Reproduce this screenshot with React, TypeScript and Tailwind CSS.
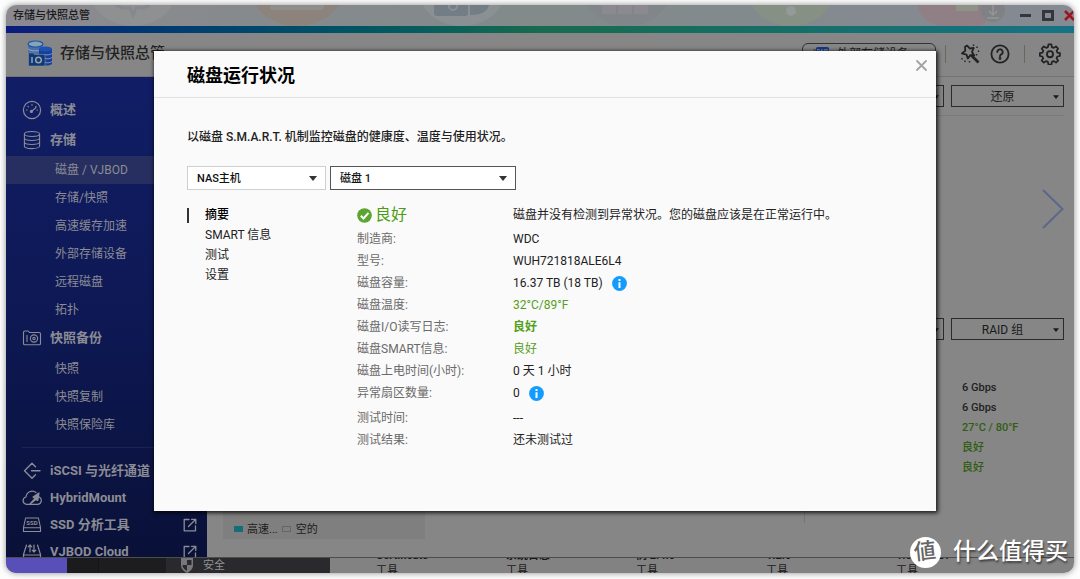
import type { ReactNode } from 'react';

const stroke = { fill: 'none', stroke: 'currentColor', strokeLinecap: 'round', strokeLinejoin: 'round' } as const;

function GaugeIcon() {
  return (
    <svg width="20" height="20" viewBox="0 0 20 20" {...stroke} strokeWidth="1.2" aria-hidden="true">
      <circle cx="10" cy="10" r="8.6" />
      <path d="M4.5 10h.6M6 6.4l.4.4M10 4.6v.6M14 6.4l-.4.4M15 10h.5M10 11l4-3.4" />
      <circle cx="9.4" cy="11.4" r="1" fill="currentColor" />
    </svg>
  );
}

function StackIcon() {
  return (
    <svg width="20" height="20" viewBox="0 0 20 20" {...stroke} strokeWidth="1.1" aria-hidden="true">
      <ellipse cx="10" cy="4" rx="7.6" ry="2.5" />
      <path d="M2.4 4v12c0 1.4 3.4 2.6 7.6 2.6s7.6-1.2 7.6-2.6V4M2.4 8c0 1.4 3.4 2.5 7.6 2.5s7.6-1.1 7.6-2.5M2.4 12c0 1.4 3.4 2.5 7.6 2.5s7.6-1.1 7.6-2.5" />
    </svg>
  );
}

function SnapshotIcon() {
  return (
    <svg width="20" height="20" viewBox="0 0 20 20" {...stroke} strokeWidth="1.1" aria-hidden="true">
      <path d="M1.5 4.5c0-.9.5-1.5 1.3-1.5h3.4l1.3 1.500h9.700c.8 0 1.300.5 1.300 1.300v9.700c0 .8-.5 1.300-1.300 1.300H2.800c-.8 0-1.300-.5-1.300-1.300z" />
      <path d="M5 7.500v6" />
      <circle cx="12" cy="10.5" r="3.6" />
      <circle cx="12" cy="10.5" r="1.2" />
    </svg>
  );
}

function IscsiIcon() {
  return (
    <svg width="20" height="20" viewBox="0 0 20 20" {...stroke} strokeWidth="1.4" aria-hidden="true">
      <path d="M13.5 5.800 10 2.300 2.500 9.700l7.500 7.500 3.500-3.500M9.500 9.700H18" />
    </svg>
  );
}

function CloudMountIcon() {
  return (
    <svg width="20" height="20" viewBox="0 0 20 20" {...stroke} strokeWidth="1.2" aria-hidden="true">
      <path d="M8 16.300H4.600a3.700 3.700 0 0 1-.6-7.300A6.200 6.200 0 0 1 14 4.500M17.300 9a3.900 3.900 0 0 1-1.700 7.300H8" />
      <path d="m8 16 5-5.500-2-1.500 6-4-1.200 7.500-1.600-1.200z" fill="currentColor" />
    </svg>
  );
}

function SsdIcon() {
  return (
    <svg width="20" height="20" viewBox="0 0 20 20" {...stroke} strokeWidth="1.1" aria-hidden="true">
      <path d="M3.6 3h12.800l2.100 9.500v4H1.500v-4zM1.500 12.800h17" />
      <text x="10" y="10.200" textAnchor="middle" fontSize="6" fontWeight="700" fontFamily="Roboto, sans-serif" fill="currentColor" stroke="none">SSD</text>
    </svg>
  );
}

function CloudDiskIcon() {
  return (
    <svg width="20" height="20" viewBox="0 0 20 20" {...stroke} strokeWidth="1.2" aria-hidden="true">
      <path d="M4.5 3 1.500 12.500v4h17v-4L15.500 3M1.500 13h17M8 10V3M6.200 4.800 8 3l1.800 1.800M12 3v7M10.200 8.200 12 10l1.800-1.800" />
    </svg>
  );
}

function OpenIcon() {
  return (
    <svg width="14" height="14" viewBox="0 0 14 14" {...stroke} strokeWidth="1.3" aria-hidden="true">
      <path d="M6 1.500H1.200v11.300h11.300V8M5.500 8.500l7-7M8.500 1.300h4.300v4.300" />
    </svg>
  );
}

function AppLogo() {
  return (
    <svg width="26" height="27" viewBox="0 0 26 27" aria-hidden="true">
      <path d="M1 3.500v12h15v-12z" fill="#4b6fa8" />
      <ellipse cx="8.5" cy="4" rx="7.5" ry="3" fill="#87a3b8" stroke="#1c55a8" strokeWidth="1.2" />
      <path d="M1 9c3 2.500 12 2.500 15 0" stroke="#9aa6c0" fill="none" />
      <path d="M12 9v15c3 2 10 2 13 0V9z" fill="#183f9c" />
      <ellipse cx="18.5" cy="9" rx="6.5" ry="2.6" fill="#1d52b0" />
      <path d="M17 14.500c3 .8 6 .3 8-.9M18 18.500c3 .6 5 .2 7-.9M18 22.500c3 .6 5 .2 7-.9" stroke="#8592b4" fill="none" />
      <path d="M1.500 13h5l1 1.500H18V26H1.500z" fill="#0c3a78" stroke="#8a8f98" strokeWidth=".6" />
      <path d="M5 17v6" stroke="#9aa0a8" strokeWidth="1.5" />
      <circle cx="11.5" cy="20" r="2.8" stroke="#9aa0a8" strokeWidth="1.5" fill="none" />
    </svg>
  );
}

function WandIcon() {
  return (
    <svg width="20" height="20" viewBox="0 0 20 20" {...stroke} strokeWidth="1.8" strokeLinecap="butt" aria-hidden="true">
      <path d="m7.200 1.600 2.500 2.900 4-.7-1.700 4.200 2.200 3.400-4-.2-2.300 3.400-1.400-4-4.600-1.200 3.400-2.600-.3-4z" />
      <path d="m11 11 7.500 7.500" strokeWidth="2.6" />
      <path d="M13.500.5V2M17 2.500V4M18.500 6.500V8M16.500 10v1.500M2 14v1.500M5 16.500V18M9.500 17v1.500" strokeWidth="1.4" />
    </svg>
  );
}

function HelpIcon() {
  return (
    <svg width="20" height="20" viewBox="0 0 20 20" {...stroke} strokeWidth="1.8" aria-hidden="true">
      <circle cx="10" cy="10" r="8.6" />
      <path d="M7.300 8a2.700 2.700 0 1 1 3.900 2.400c-.8.4-1.200.9-1.200 1.800" />
      <circle cx="10" cy="14.500" r=".5" fill="currentColor" />
    </svg>
  );
}

function GearIcon() {
  return (
    <svg width="22" height="22" viewBox="0 0 24 24" {...stroke} strokeWidth="2" aria-hidden="true">
      <path d="M10.300 1.500h3.400l.6 3 2.100.9 2.600-1.700 2.400 2.400-1.700 2.600.9 2.100 2.900.5v3.400l-3 .6-.9 2.100 1.800 2.500-2.400 2.400-2.600-1.700-2.100.9-.6 3h-3.400l-.6-3-2.100-.9L5 22.300l-2.400-2.400 1.700-2.500-.9-2.100-2.900-.6v-3.400l3-.5.9-2.100-1.800-2.600L5 3.700l2.600 1.700 2.100-.9z" transform="translate(.5 .2) scale(.95)" />
      <circle cx="12" cy="12.200" r="3.300" />
    </svg>
  );
}

function Caret({ className }: { className: string }) {
  return (
    <svg viewBox="0 0 8 5" className={className} aria-hidden="true">
      <path d="M0 0h8L4 5z" fill="currentColor" />
    </svg>
  );
}

function InfoIcon() {
  return (
    <svg width="15" height="15" viewBox="0 0 15 15" aria-hidden="true">
      <circle cx="7.5" cy="7.5" r="7.4" fill="#149bfe" />
      <path d="M6.500 3h2v2h-2zM6.500 6.200h2V12h-2z" fill="#fff" />
    </svg>
  );
}

function OkIcon() {
  return (
    <svg width="15" height="15" viewBox="0 0 15 15" aria-hidden="true">
      <circle cx="7.5" cy="7.5" r="7.3" fill="#5ba532" />
      <path d="m3.800 7.800 2.700 2.700 5-5.700" fill="none" stroke="#fff" strokeWidth="2" />
    </svg>
  );
}

function DesktopStrip() {
  return (
    <svg className="absolute inset-0 h-full w-full" viewBox="0 0 1068 21" preserveAspectRatio="xMidYMin slice" aria-hidden="true">
      <ellipse cx="127" cy="-12" rx="42" ry="33" fill="#8f9092" />
      <path d="m110 0 7 3 7 0 3 7 3-7 7 0 7-3" stroke="#85888d" strokeWidth="3" fill="none" />
      <ellipse cx="291" cy="-12" rx="44" ry="33" fill="#8d837d" />
      <rect x="264" y="-8" width="54" height="13" rx="3" fill="#8e8f8b" />
      <ellipse cx="456" cy="-12" rx="42" ry="33" fill="#8b9092" />
      <path d="M428 0h34v8q0 3-3 3h-28q-3 0-3-3zM464 0h19q-2 10-19 10z" fill="#737d86" />
      <circle cx="447" cy="1" r="4" stroke="#8b9092" strokeWidth="2" fill="none" />
      <ellipse cx="621" cy="-12" rx="42" ry="33" fill="#80868a" />
      <path d="M596 0h14v9h-14zM612 0h14v9h-14zM628 0h14v9h-14z" fill="#8c8a90" />
      <ellipse cx="785" cy="-12" rx="42" ry="33" fill="#879085" />
      <circle cx="785" cy="6" r="5" fill="#949999" />
      <path d="M911 0q6 20 26 21h38q12-9 14-21z" fill="#917f86" />
      <path d="M950 0h22v6h-22z" fill="#8d9487" />
      <circle cx="987" cy="5" r="12" fill="#7f8184" />
      <path d="M987-1v11m-4-4 4 4 4-4m-10 7h12" stroke="#949698" strokeWidth="1.5" fill="none" />
    </svg>
  );
}

type Section = { label: string; icon: ReactNode; children?: string[] };

const sections: Section[] = [
  { label: '概述', icon: <GaugeIcon /> },
  { label: '存储', icon: <StackIcon />, children: ['磁盘 / VJBOD', '存储/快照', '高速缓存加速', '外部存储设备', '远程磁盘', '拓扑'] },
  { label: '快照备份', icon: <SnapshotIcon />, children: ['快照', '快照复制', '快照保险库'] },
];

const tools = [
  { label: 'iSCSI 与光纤通道', icon: <IscsiIcon />, external: false },
  { label: 'HybridMount', icon: <CloudMountIcon />, external: false },
  { label: 'SSD 分析工具', icon: <SsdIcon />, external: true },
  { label: 'VJBOD Cloud', icon: <CloudDiskIcon />, external: true },
];

function Sidebar() {
  return (
    <nav className="flex w-[201px] shrink-0 flex-col overflow-hidden bg-linear-to-b from-[#111e66] via-[#0e1854] to-[#091138] pt-[18px] text-[#8b8c94]">
      {sections.map((section, index) => (
        <div key={section.label} className="shrink-0">
          <a href="#" className={`flex items-center gap-2 pl-4 text-[13px] font-bold ${index < 2 ? 'h-[30px]' : 'h-7'}`}>
            {section.icon}
            {section.label}
          </a>
          {section.children && (
            <ul className={index === 2 ? 'pt-[3px]' : 'pt-px'}>
              {section.children.map((child) => (
                <li key={child}>
                  <a
                    href="#"
                    className={`flex h-7 items-center pl-[49px] text-xs ${child === '磁盘 / VJBOD' ? 'bg-[#272f60]' : ''}`}
                  >
                    {child}
                  </a>
                </li>
              ))}
            </ul>
          )}
        </div>
      ))}
      <div className="mt-2 ml-4 shrink-0 border-t border-[#1b2350] pt-[9px]">
        {tools.map((tool) => (
          <a key={tool.label} href="#" className="flex h-[27px] items-center gap-2 pr-[10px] text-[13px] font-bold">
            {tool.icon}
            <span className="flex-1 whitespace-nowrap">{tool.label}</span>
            {tool.external && <OpenIcon />}
          </a>
        ))}
      </div>
    </nav>
  );
}

function MenuButton({ label }: { label: string }) {
  return (
    <button type="button" className="flex h-[22px] w-[113px] items-center border border-[#2b2b2b] pt-px pr-1 text-xs text-[#1a1a1a]">
      <span className="flex-1">{label}</span>
      <Caret className="h-1 w-1.5" />
    </button>
  );
}

function Workspace() {
  return (
    <main className="flex min-w-0 flex-1 flex-col bg-[#868686] pt-2 pr-[10px] pb-[18px] pl-4">
      <div className="flex justify-end gap-[7px] border-b border-[#7a7a7a] pb-2">
        <MenuButton label="操作" />
        <MenuButton label="还原" />
      </div>
      <div className="flex h-[186px] shrink-0 items-center justify-end">
        <button type="button" aria-label="下一页">
          <svg width="22" height="40" viewBox="0 0 22 40" fill="none" stroke="#5c6789" strokeWidth="2" aria-hidden="true">
            <path d="m1 1 19.500 19L1 39" />
          </svg>
        </button>
      </div>
      <div className="flex min-h-0 flex-1 justify-between">
        <div className="flex h-11 w-[202px] items-end gap-1 self-end bg-[#7f7f7f] pb-px pl-[11px] text-[11px] text-[#1c1c1c]">
          <span className="mb-[6px] h-[6px] w-[9px] bg-[#146d77]" />
          <span>高速...</span>
          <span className="mb-[6px] h-[6px] w-[9px] border border-[#666]" />
          <span className="pl-px">空的</span>
        </div>
        <aside className="mb-4 flex w-[260px] flex-col items-end border-l border-[#767676] pt-4">
          <div className="flex gap-[7px]">
            <MenuButton label="操作" />
            <MenuButton label="RAID 组" />
          </div>
          <div className="w-[113px] pt-[38px] pl-[11px] text-[11px] leading-5 font-medium text-[#222]">
            <p>6 Gbps</p>
            <p>6 Gbps</p>
            <p className="text-[#305e10]">27°C / 80°F</p>
            <p className="text-[#305e10]">良好</p>
            <p className="text-[#305e10]">良好</p>
          </div>
        </aside>
      </div>
    </main>
  );
}

const widgets = ['Certificate', '系统日志', '例 2.4.0', '1.2.0', '1.0.1.0421'];

function DesktopBottom() {
  return (
    <footer className="flex h-4 shrink-0 overflow-hidden border-t border-[#4d4d4d] bg-[#828282] text-[11px]">
      <div className="w-[61px] bg-[#5850b8]" />
      <div className="w-[31px] bg-[#1b1b1e]" />
      <div className="w-[68px] border-l border-[#151517] bg-[#1d1d20]" />
      <div className="flex w-[164px] items-center gap-[9px] bg-[#29292e] pt-px pl-[14px] text-[#929295]">
        <svg width="14" height="16" viewBox="0 0 14 16" className="shrink-0" aria-hidden="true">
          <path d="M1 0h12v7c0 4-3 6.500-6 8-3-1.500-6-4-6-8z" fill="#77787c" />
          <path d="M7 2h4.500v5H7zM2.500 7H7v6C4.500 11.500 2.500 10 2.500 7z" fill="#29292e" />
        </svg>
        安全
      </div>
      <div className="grid flex-1 grid-cols-[repeat(5,130px)] pl-[46px]">
        {widgets.map((widget) => (
          <div key={widget} className="flex h-5 flex-col justify-end leading-[15px] text-[#191919]">
            <p className="font-bold whitespace-nowrap">{widget}</p>
            <p>工具</p>
          </div>
        ))}
      </div>
    </footer>
  );
}

function Picker({ id, label, value, className }: { id: string; label: string; value: string; className: string }) {
  return (
    <div className="relative">
      <label htmlFor={id} className="sr-only">{label}</label>
      <select id={id} className={`block h-6 appearance-none border bg-white pt-[2px] pr-6 pl-[9px] text-[11px] font-medium text-[#111] ${className}`}>
        <option>{value}</option>
      </select>
      <Caret className="pointer-events-none absolute top-[10px] right-[9px] h-[5px] w-2 text-[#333]" />
    </div>
  );
}

type Row = { label: string; value: string; tone?: string; info?: boolean; spaced?: boolean };

const rows: Row[] = [
  { label: '制造商:', value: 'WDC' },
  { label: '型号:', value: 'WUH721818ALE6L4' },
  { label: '磁盘容量:', value: '16.37 TB (18 TB)', info: true },
  { label: '磁盘温度:', value: '32°C/89°F', tone: 'text-[#55a01b]' },
  { label: '磁盘I/O读写日志:', value: '良好', tone: 'font-bold text-[#55a01b]' },
  { label: '磁盘SMART信息:', value: '良好', tone: 'text-[#55a01b]' },
  { label: '磁盘上电时间(小时):', value: '0 天 1 小时' },
  { label: '异常扇区数量:', value: '0', info: true },
  { label: '测试时间:', value: '---', spaced: true },
  { label: '测试结果:', value: '还未测试过' },
];

function HealthDialog() {
  return (
    <section
      role="dialog"
      aria-labelledby="health-title"
      className="absolute top-[46px] right-[138px] left-[148px] bg-[#fafafa] pb-[60px] text-xs text-[#222] shadow-[1px_1px_4px_1px_rgba(0,0,0,0.8)]"
    >
      <header className="flex h-[47px] items-center justify-between border-b border-[#e2e2e2] pr-[9px] pl-[33px]">
        <h2 id="health-title" className="pt-[3px] text-lg font-bold text-black">磁盘运行状况</h2>
        <button type="button" aria-label="关闭" className="self-start pt-[9px] text-[#a3a3a3]">
          <svg width="11" height="11" viewBox="0 0 11 11" {...stroke} strokeWidth="1.8">
            <path d="m1 1 9 9M10 1l-9 9" />
          </svg>
        </button>
      </header>
      <div className="px-[33px] pt-[30px]">
        <p className="leading-[18px] font-medium">以磁盘 S.M.A.R.T. 机制监控磁盘的健康度、温度与使用状况。</p>
        <div className="mt-5 flex gap-1">
          <Picker id="host" label="主机" value="NAS主机" className="w-[139px] border-[#cfcfcf]" />
          <Picker id="disk" label="磁盘" value="磁盘 1" className="w-[186px] border-[#555]" />
        </div>
        <div className="flex pt-[15px]">
          <nav className="w-[170px] shrink-0 leading-5">
            <a href="#" aria-current="page" className="flex items-center font-medium text-black">
              <span className="mr-4 h-[15px] w-0.5 bg-[#333]" />
              摘要
            </a>
            <a href="#" className="block pl-[18px]">SMART 信息</a>
            <a href="#" className="block pl-[18px]">测试</a>
            <a href="#" className="block pl-[18px]">设置</a>
          </nav>
          <dl className="min-w-0 flex-1">
            <div className="mb-[3px] flex h-5 items-center">
              <dt className="flex w-[156px] shrink-0 items-center gap-[3px] text-base text-[#4a9d12]">
                <OkIcon />
                良好
              </dt>
              <dd>磁盘并没有检测到异常状况。您的磁盘应该是在正常运行中。</dd>
            </div>
            {rows.map((row) => (
              <div key={row.label} className={`flex h-[22px] items-center ${row.spaced ? 'mt-[3px]' : ''}`}>
                <dt className="w-[156px] shrink-0 text-[#6a6a6a]">{row.label}</dt>
                <dd className={`flex items-center gap-[9px] ${row.tone ?? ''}`}>
                  {row.value}
                  {row.info && <InfoIcon />}
                </dd>
              </div>
            ))}
          </dl>
        </div>
      </div>
    </section>
  );
}

function Watermark() {
  return (
    <div className="absolute right-[6px] bottom-[5px] flex items-center gap-3 text-white">
      <span className="flex size-[31px] items-center justify-center rounded-full bg-white text-[22px] leading-8 font-medium text-[#666]">
        <span className="-rotate-6">値</span>
      </span>
      <span className="text-[23px] leading-8 font-medium text-shadow-[1px_2px_2px_rgba(0,0,0,0.5)]">什么值得买</span>
    </div>
  );
}

export default function App() {
  return (
    <div className="h-screen bg-[#fdfdfd] px-[6px] pt-[5px] pb-[6px] font-['Roboto','Noto_Sans_CJK_SC',sans-serif]">
      <div className="relative flex h-full flex-col overflow-hidden rounded-[10px] shadow-[0_0_6px_rgba(0,0,0,0.45)]">
        <div className="relative flex h-[21px] shrink-0 items-center justify-between overflow-hidden bg-linear-to-r from-[#8b8a90] via-[#828a8a] to-[#858a93] pl-[7px]">
          <DesktopStrip />
          <h1 className="relative pt-[2px] text-[11px] font-medium text-[#1a1a1c]">存储与快照总管</h1>
          <div className="relative flex items-center gap-[11px] text-[#33373c]">
            <button type="button" aria-label="最小化" className="h-[3px] w-[11px] bg-[#33373c]" />
            <button type="button" aria-label="最大化" className="h-[11px] w-3 border-[3px] border-[#33373c]" />
            <button type="button" aria-label="关闭窗口" className="-ml-px text-[#9b1520]">
              <svg width="10" height="11" viewBox="0 0 10 11" {...stroke} strokeLinecap="butt" strokeWidth="2.5">
                <path d="m1 1 9 9M10 1l-9 9" />
              </svg>
            </button>
          </div>
        </div>
        <div className="h-[7px] shrink-0 bg-linear-to-r from-[#0d1b7c] via-[#176b4e] to-[#167384]" />
        <header className="flex h-11 shrink-0 items-center border-b border-[#747474] bg-[#868686] pr-[13px] pb-[2px] pl-[21px] text-[#222]">
          <AppLogo />
          <span className="flex-1 pl-[7px] text-[15px] font-medium">存储与快照总管</span>
          <button type="button" className="flex h-[22px] w-[134px] items-center gap-2 rounded-[6px] border border-[#333] pl-[10px] text-xs">
            <svg width="16" height="14" viewBox="0 0 16 14" aria-hidden="true">
              <path d="M0 2h3v11H0z" fill="#626a77" />
              <rect x="3" width="13" height="14" rx="1.5" fill="#173985" />
              <text x="9.500" y="5.500" textAnchor="middle" fontSize="5" fontWeight="700" fill="#98a2bb">RAID</text>
            </svg>
            外部存储设备
          </button>
          <span className="mr-[14px] ml-[9px] h-[18px] w-px bg-[#6a675e]" />
          <div className="flex items-center gap-[10px]">
            <button type="button" aria-label="向导"><WandIcon /></button>
            <button type="button" aria-label="帮助"><HelpIcon /></button>
          </div>
          <span className="mr-[14px] ml-[14px] h-[18px] w-px bg-[#6a675e]" />
          <button type="button" aria-label="设置"><GearIcon /></button>
        </header>
        <div className="flex min-h-0 flex-1">
          <Sidebar />
          <Workspace />
        </div>
        <DesktopBottom />
        <HealthDialog />
        <Watermark />
      </div>
    </div>
  );
}
